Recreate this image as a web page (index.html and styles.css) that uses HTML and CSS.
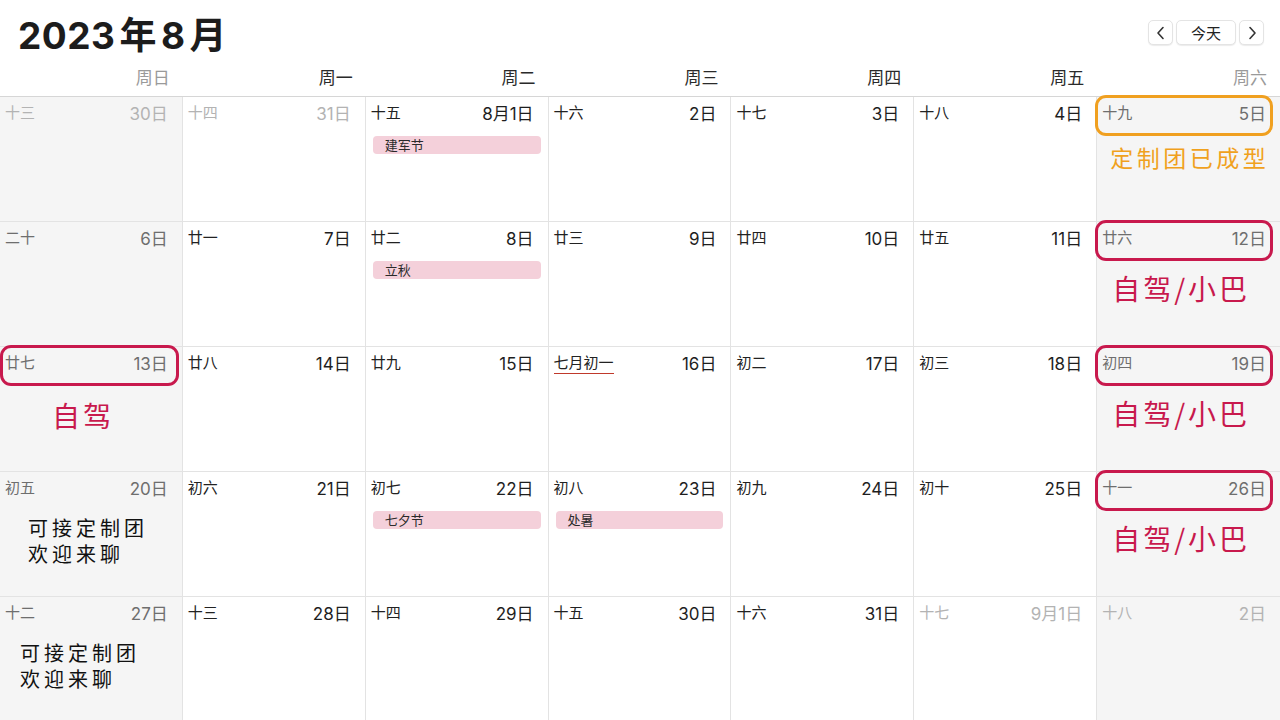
FILE: index.html
```html
<!DOCTYPE html>
<html lang="zh-CN">
<head>
    <meta charset="UTF-8">
    <meta name="viewport" content="width=device-width, initial-scale=1.0">
    <title>2023年8月</title>
    <link rel="stylesheet" href="styles.css">
</head>
<body>
    <div class="toolbar">
        <h1 class="month-title">2023<span class="cjk">年</span>8<span class="cjk">月</span></h1>
        <div class="nav">
            <button class="nav-btn arrow">
                <svg width="10" height="14" viewBox="0 0 10 14" fill="none" stroke="#333" stroke-width="1.6" stroke-linecap="round" stroke-linejoin="round"><path d="M7 1.5L2 7l5 5.5"/></svg>
            </button>
            <button class="nav-btn today">今天</button>
            <button class="nav-btn arrow">
                <svg width="10" height="14" viewBox="0 0 10 14" fill="none" stroke="#333" stroke-width="1.6" stroke-linecap="round" stroke-linejoin="round"><path d="M3 1.5L8 7l-5 5.5"/></svg>
            </button>
        </div>
    </div>

    <div class="weekdays">
        <div class="weekday weekend">周日</div>
        <div class="weekday">周一</div>
        <div class="weekday">周二</div>
        <div class="weekday">周三</div>
        <div class="weekday">周四</div>
        <div class="weekday">周五</div>
        <div class="weekday weekend">周六</div>
    </div>

    <div class="month">
        <!-- 第一周 -->
        <div class="cell weekend other"><div class="cell-head"><span class="lunar">十三</span><span class="day">30日</span></div></div>
        <div class="cell other"><div class="cell-head"><span class="lunar">十四</span><span class="day">31日</span></div></div>
        <div class="cell"><div class="cell-head"><span class="lunar">十五</span><span class="day">8月1日</span></div><div class="event">建军节</div></div>
        <div class="cell"><div class="cell-head"><span class="lunar">十六</span><span class="day">2日</span></div></div>
        <div class="cell"><div class="cell-head"><span class="lunar">十七</span><span class="day">3日</span></div></div>
        <div class="cell"><div class="cell-head"><span class="lunar">十八</span><span class="day">4日</span></div></div>
        <div class="cell weekend">
            <div class="ring ring-orange"></div>
            <div class="cell-head"><span class="lunar">十九</span><span class="day">5日</span></div>
            <div class="note note-orange">定制团已成型</div>
        </div>

        <!-- 第二周 -->
        <div class="cell weekend"><div class="cell-head"><span class="lunar">二十</span><span class="day">6日</span></div></div>
        <div class="cell"><div class="cell-head"><span class="lunar">廿一</span><span class="day">7日</span></div></div>
        <div class="cell"><div class="cell-head"><span class="lunar">廿二</span><span class="day">8日</span></div><div class="event">立秋</div></div>
        <div class="cell"><div class="cell-head"><span class="lunar">廿三</span><span class="day">9日</span></div></div>
        <div class="cell"><div class="cell-head"><span class="lunar">廿四</span><span class="day">10日</span></div></div>
        <div class="cell"><div class="cell-head"><span class="lunar">廿五</span><span class="day">11日</span></div></div>
        <div class="cell weekend">
            <div class="ring ring-red"></div>
            <div class="cell-head"><span class="lunar">廿六</span><span class="day">12日</span></div>
            <div class="note note-red">自驾/小巴</div>
        </div>

        <!-- 第三周 -->
        <div class="cell weekend">
            <div class="ring ring-red ring-first"></div>
            <div class="cell-head"><span class="lunar">廿七</span><span class="day">13日</span></div>
            <div class="note note-red note-short">自驾</div>
        </div>
        <div class="cell"><div class="cell-head"><span class="lunar">廿八</span><span class="day">14日</span></div></div>
        <div class="cell"><div class="cell-head"><span class="lunar">廿九</span><span class="day">15日</span></div></div>
        <div class="cell"><div class="cell-head"><span class="lunar new-month">七月初一</span><span class="day">16日</span></div></div>
        <div class="cell"><div class="cell-head"><span class="lunar">初二</span><span class="day">17日</span></div></div>
        <div class="cell"><div class="cell-head"><span class="lunar">初三</span><span class="day">18日</span></div></div>
        <div class="cell weekend">
            <div class="ring ring-red"></div>
            <div class="cell-head"><span class="lunar">初四</span><span class="day">19日</span></div>
            <div class="note note-red">自驾/小巴</div>
        </div>

        <!-- 第四周 -->
        <div class="cell weekend">
            <div class="cell-head"><span class="lunar">初五</span><span class="day">20日</span></div>
            <div class="note note-plain">可接定制团<br>欢迎来聊</div>
        </div>
        <div class="cell"><div class="cell-head"><span class="lunar">初六</span><span class="day">21日</span></div></div>
        <div class="cell"><div class="cell-head"><span class="lunar">初七</span><span class="day">22日</span></div><div class="event">七夕节</div></div>
        <div class="cell"><div class="cell-head"><span class="lunar">初八</span><span class="day">23日</span></div><div class="event">处暑</div></div>
        <div class="cell"><div class="cell-head"><span class="lunar">初九</span><span class="day">24日</span></div></div>
        <div class="cell"><div class="cell-head"><span class="lunar">初十</span><span class="day">25日</span></div></div>
        <div class="cell weekend">
            <div class="ring ring-red"></div>
            <div class="cell-head"><span class="lunar">十一</span><span class="day">26日</span></div>
            <div class="note note-red">自驾/小巴</div>
        </div>

        <!-- 第五周 -->
        <div class="cell weekend">
            <div class="cell-head"><span class="lunar">十二</span><span class="day">27日</span></div>
            <div class="note note-plain note-left">可接定制团<br>欢迎来聊</div>
        </div>
        <div class="cell"><div class="cell-head"><span class="lunar">十三</span><span class="day">28日</span></div></div>
        <div class="cell"><div class="cell-head"><span class="lunar">十四</span><span class="day">29日</span></div></div>
        <div class="cell"><div class="cell-head"><span class="lunar">十五</span><span class="day">30日</span></div></div>
        <div class="cell"><div class="cell-head"><span class="lunar">十六</span><span class="day">31日</span></div></div>
        <div class="cell other"><div class="cell-head"><span class="lunar">十七</span><span class="day">9月1日</span></div></div>
        <div class="cell weekend other"><div class="cell-head"><span class="lunar">十八</span><span class="day">2日</span></div></div>
    </div>
</body>
</html>
```

FILE: styles.css
```css
* {
    box-sizing: border-box;
    margin: 0;
    padding: 0;
}

html, body {
    width: 1280px;
    height: 720px;
    overflow: hidden;
    background-color: #ffffff;
    font-family: Inter, "Noto Sans CJK SC", sans-serif;
    color: #1e1e1e;
}

/* 顶部标题栏 */
.toolbar {
    height: 62px;
    display: flex;
    justify-content: space-between;
    align-items: flex-start;
    padding: 11px 16px 0 18px;
}

.month-title {
    font-size: 37px;
    font-weight: 700;
    line-height: 44px;
    color: #1c1c1c;
    letter-spacing: 0.5px;
}

.month-title .cjk {
    font-family: "Noto Sans CJK SC", sans-serif;
    margin: 0 4px;
}

.nav {
    display: flex;
    gap: 3px;
    margin-top: 9px;
}

.nav-btn {
    height: 25px;
    border: 1px solid #e4e4e4;
    border-radius: 5px;
    background-color: #ffffff;
    box-shadow: 0 1px 1px rgba(0, 0, 0, 0.08);
    display: flex;
    align-items: center;
    justify-content: center;
    font-family: "Noto Sans CJK SC", sans-serif;
    font-size: 15px;
    color: #222;
}

.nav-btn.arrow {
    width: 25px;
}

.nav-btn.today {
    width: 60px;
}

/* 星期栏 */
.weekdays {
    display: grid;
    grid-template-columns: repeat(7, 1fr);
    height: 35px;
    border-bottom: 1px solid #d6d6d6;
}

.weekday {
    text-align: right;
    padding-right: 13px;
    font-family: "Noto Sans CJK SC", sans-serif;
    font-size: 17px;
    line-height: 30px;
    color: #2a2a2a;
}

.weekday.weekend {
    color: #9a9a9a;
}

/* 月视图 */
.month {
    display: grid;
    grid-template-columns: repeat(7, 1fr);
    grid-auto-rows: 125px;
}

.cell {
    position: relative;
    border-right: 1px solid #e3e3e3;
    border-bottom: 1px solid #e3e3e3;
    background-color: #ffffff;
}

.cell:nth-child(7n) {
    border-right: none;
}

.cell.weekend {
    background-color: #f5f5f5;
}

.cell-head {
    position: relative;
    display: flex;
    justify-content: space-between;
    align-items: flex-start;
    padding: 5px 14px 0 5px;
    height: 33px;
}

.lunar {
    font-family: "Noto Sans CJK SC", sans-serif;
    font-size: 15px;
    line-height: 20px;
    color: #222;
}

.day {
    font-size: 17px;
    line-height: 24px;
    color: #1e1e1e;
}

.cell.weekend .lunar,
.cell.weekend .day {
    color: #6e6e6e;
}

.cell.other .lunar,
.cell.other .day {
    color: #b3b3b3;
}

.new-month {
    border-bottom: 1px solid #c0392b;
    padding-bottom: 1px;
}

/* 节日条 */
.event {
    margin: 6px 7px 0 7px;
    height: 18px;
    border-radius: 4px;
    background-color: #f4d0da;
    padding-left: 12px;
    font-family: "Noto Sans CJK SC", sans-serif;
    font-size: 13px;
    line-height: 18px;
    color: #2a2a2a;
}

/* 手绘标记 */
.ring {
    position: absolute;
    top: -2px;
    left: -2px;
    right: 7px;
    height: 41px;
    border: 3px solid;
    border-radius: 11px;
}

.ring-orange {
    border-color: #f0a020;
}

.ring-red {
    border-color: #c8194d;
}

.ring-first {
    left: 0;
    right: 3px;
}

.note {
    font-family: "Noto Sans CJK SC", sans-serif;
}

.note-orange {
    color: #f0a11d;
    font-size: 23px;
    line-height: 28px;
    letter-spacing: 3.5px;
    padding-left: 13px;
    margin-top: 13px;
}

.note-red {
    color: #c8194d;
    font-size: 28px;
    line-height: 34px;
    letter-spacing: 3px;
    padding-left: 15px;
    margin-top: 16px;
}

.note-short {
    padding-left: 52px;
    margin-top: 18px;
}

.note-plain {
    color: #111;
    font-size: 20px;
    line-height: 26px;
    letter-spacing: 4px;
    padding-left: 28px;
    margin-top: 10px;
}

.note-left {
    padding-left: 20px;
}
```
